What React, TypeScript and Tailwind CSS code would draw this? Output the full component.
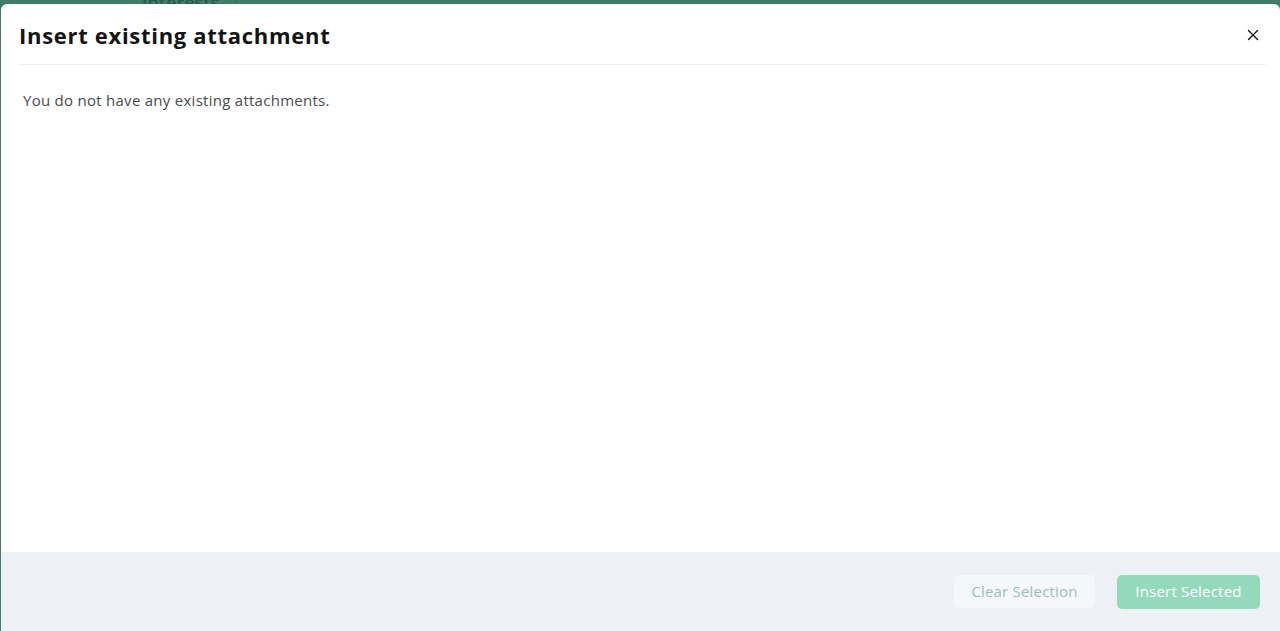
import { X } from 'lucide-react'

export default function App() {
  return (
    <div className="relative h-[631px] w-[1280px] overflow-hidden bg-[#3f7d67]" style={{ fontFamily: '"Open Sans", "Liberation Sans", sans-serif' }}>
      {/* page behind the overlay */}
      <div className="flex h-[5px] items-end">
        <div className="ml-[142px] -mb-[6px] text-[18px] font-semibold leading-none text-[#2c5a4a]">Interests</div>
        <div className="ml-[17px] h-full w-px bg-[#356d59]" />
      </div>

      {/* modal */}
      <div className="absolute left-[1px] right-0 top-[4px] bottom-0 flex flex-col rounded-tl-[6px] rounded-tr-[6px] bg-white">
        <div className="ml-[18px] mr-[14px] flex h-[61px] items-center justify-between border-b border-[#efefef] pt-[2px]">
          <h2 className="text-[22px] font-bold tracking-[0.7px] text-[#141414]">Insert existing attachment</h2>
          <button className="mr-[4px] text-[#111]">
            <X className="h-[18px] w-[18px]" strokeWidth={1.8} />
          </button>
        </div>
        <div className="flex-1 px-[22px] pt-[24px]">
          <p className="text-[15px] tracking-[0.27px] text-[#4b4b4b]">You do not have any existing attachments.</p>
        </div>
        <div className="flex h-[79px] items-center justify-end gap-[22px] bg-[#edf1f5] pr-[20px]">
          <button className="h-[33px] w-[141px] rounded-[5px] bg-[#f5f8fa] text-[15px] tracking-[0.2px] text-[#9fbfb4]">Clear Selection</button>
          <button className="h-[34px] w-[143px] rounded-[5px] bg-[#95d9bd] text-[15px] tracking-[0.2px] text-white">Insert Selected</button>
        </div>
      </div>
    </div>
  )
}
